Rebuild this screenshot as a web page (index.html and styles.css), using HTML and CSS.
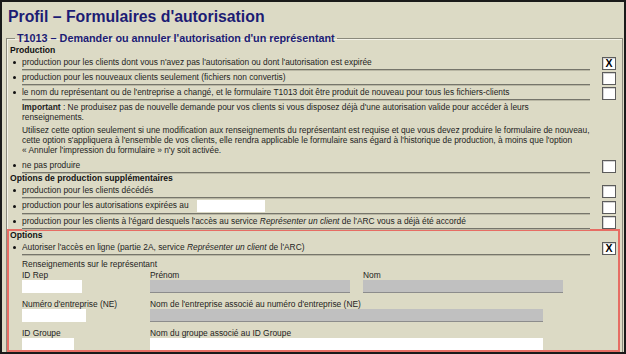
FILE: index.html
```html
<!DOCTYPE html>
<html lang="fr">
<head>
  <meta charset="UTF-8" />
  <meta name="viewport" content="width=device-width, initial-scale=1.0" />
  <title>Profil – Formulaires d'autorisation</title>
  <link rel="stylesheet" href="styles.css">
</head>
<body>
  <div class="page">
    <h1 class="title">Profil – Formulaires d'autorisation</h1>

    <fieldset class="group">
      <legend>T1013 – Demander ou annuler l'autorisation d'un représentant</legend>

      <div class="head">Production</div>
      <div class="row">
        <span class="bullet"></span>
        <span class="label">production pour les clients dont vous n'avez pas l'autorisation ou dont l'autorisation est expirée</span>
        <span class="check">X</span>
      </div>
      <div class="row">
        <span class="bullet"></span>
        <span class="label">production pour les nouveaux clients seulement (fichiers non convertis)</span>
        <span class="check"></span>
      </div>
      <div class="row">
        <span class="bullet"></span>
        <span class="label">le nom du représentant ou de l'entreprise a changé, et le formulaire T1013 doit être produit de nouveau pour tous les fichiers-clients</span>
        <span class="check"></span>
      </div>

      <div class="note">
        <p><b>Important</b> : Ne produisez pas de nouvelle demande pour vos clients si vous disposez déjà d'une autorisation valide pour accéder à leurs<br>renseignements.</p>
        <p>Utilisez cette option seulement si une modification aux renseignements du représentant est requise et que vous devez produire le formulaire de nouveau,<br>cette option s'appliquera à l'ensemble de vos clients, elle rendra applicable le formulaire sans égard à l'historique de production, à moins que l'option<br>« Annuler l'impression du formulaire » n'y soit activée.</p>
      </div>

      <div class="row">
        <span class="bullet"></span>
        <span class="label">ne pas produire</span>
        <span class="check"></span>
      </div>

      <div class="head">Options de production supplémentaires</div>
      <div class="row">
        <span class="bullet"></span>
        <span class="label">production pour les clients décédés</span>
        <span class="check"></span>
      </div>
      <div class="row">
        <span class="bullet"></span>
        <span class="label">production pour les autorisations expirées au <span class="field field-date"></span></span>
        <span class="check"></span>
      </div>
      <div class="row">
        <span class="bullet"></span>
        <span class="label">production pour les clients à l'égard desquels l'accès au service <i>Représenter un client</i> de l'ARC vous a déjà été accordé</span>
        <span class="check"></span>
      </div>

      <div class="options">
        <div class="head head-tight">Options</div>
        <div class="row">
          <span class="bullet"></span>
          <span class="label">Autoriser l'accès en ligne (partie 2A, service <i>Représenter un client</i> de l'ARC)</span>
          <span class="check">X</span>
        </div>

        <div class="rep">
          <div class="rep-title">Renseignements sur le représentant</div>
          <div class="fields">
            <div class="cell">
              <div class="flabel">ID Rep</div>
              <div class="field field-idrep"></div>
            </div>
            <div class="cell">
              <div class="flabel">Prénom</div>
              <div class="field field-grey field-name"></div>
            </div>
            <div class="cell">
              <div class="flabel">Nom</div>
              <div class="field field-grey field-name"></div>
            </div>

            <div class="cell">
              <div class="flabel">Numéro d'entreprise (NE)</div>
              <div class="field field-ne"></div>
            </div>
            <div class="cell cell-wide">
              <div class="flabel">Nom de l'entreprise associé au numéro d'entreprise (NE)</div>
              <div class="field field-grey field-long"></div>
            </div>

            <div class="cell">
              <div class="flabel">ID Groupe</div>
              <div class="field field-group"></div>
            </div>
            <div class="cell cell-wide">
              <div class="flabel">Nom du groupe associé au ID Groupe</div>
              <div class="field field-long"></div>
            </div>
          </div>
        </div>
      </div>

      <div class="row">
        <span class="bullet"></span>
        <span class="label"></span>
        <span class="check"></span>
      </div>
    </fieldset>
  </div>
</body>
</html>
```

FILE: styles.css
```css
body {
  margin: 0;
  font-family: 'Liberation Sans', Arial, sans-serif;
  font-size: 8.4px;
  color: #1e1e1e;
}

.page {
  box-sizing: border-box;
  width: 626px;
  height: 354px;
  overflow: hidden;
  background: #dcdac5;
  border: 2px solid #1a1a1a;
}

.title {
  margin: 0;
  padding: 5px 6px 6px;
  font-size: 15.8px;
  line-height: 19px;
  font-weight: bold;
  color: #1c1c74;
}

.group {
  margin: 0 1px 0 4px;
  padding: 0 3px 0 3px;
  border: 1px solid #8a897c;
  box-shadow: inset 1px 1px 0 #f3f2e8;
  min-width: 0;
}

.group legend {
  margin-left: 5px;
  padding: 0 2px;
  font-size: 10.8px;
  line-height: 13px;
  font-weight: bold;
  color: #1c1c74;
}

.head {
  font-size: 8.6px;
  line-height: 10px;
  font-weight: bold;
  color: #111;
}

.head-tight {
  line-height: 9px;
}

.row {
  display: flex;
  align-items: flex-end;
}

.bullet {
  width: 3px;
  height: 3px;
  margin: 0 6px 6px 3px;
  border-radius: 50%;
  background: #111;
  flex: none;
}

.label {
  flex: 1;
  padding: 1px 0;
  line-height: 12px;
  border-bottom: 1px solid #76756b;
  box-shadow: 0 1px 0 #b9b7a4;
  white-space: nowrap;
  overflow: hidden;
}

.check {
  flex: none;
  box-sizing: border-box;
  width: 14px;
  height: 13px;
  margin-left: 12px;
  margin-right: 3px;
  background: #fff;
  border: 1px solid #5c5c5c;
  box-shadow: inset 1px 1px 0 #d4d4d4;
  font-size: 10.5px;
  line-height: 11px;
  font-weight: bold;
  text-align: center;
  color: #000;
}

.note {
  padding: 2px 0 0 12px;
}

.note p {
  margin: 0 0 3px;
  line-height: 10px;
  white-space: nowrap;
}

.field {
  display: block;
  height: 13px;
  background: #fff;
}

.field-grey {
  background: #c0c0c0;
  box-sizing: border-box;
  border-bottom: 1px solid #8c8c8c;
}

.field-date {
  display: inline-block;
  vertical-align: middle;
  width: 68px;
  height: 12px;
  margin-left: 6px;
}

.options {
  margin: 0 -1px 0 -3px;
  padding: 0 0 0 1px;
  border: 2px solid #e76d64;
  height: 119px;
  overflow: hidden;
}

.options .check {
  margin-right: 2px;
}

.rep {
  padding-left: 12px;
}

.rep-title {
  margin-top: 4px;
  line-height: 10px;
}

.fields {
  display: grid;
  grid-template-columns: 128px 213px 1fr;
  row-gap: 6px;
  margin-top: 1px;
}

.cell-wide {
  grid-column: span 2;
}

.flabel {
  line-height: 10px;
  white-space: nowrap;
}

.field-idrep { width: 60px; }
.field-ne { width: 64px; }
.field-group { width: 52px; }
.field-name { width: 200px; }
.field-long { width: 393px; }
```
